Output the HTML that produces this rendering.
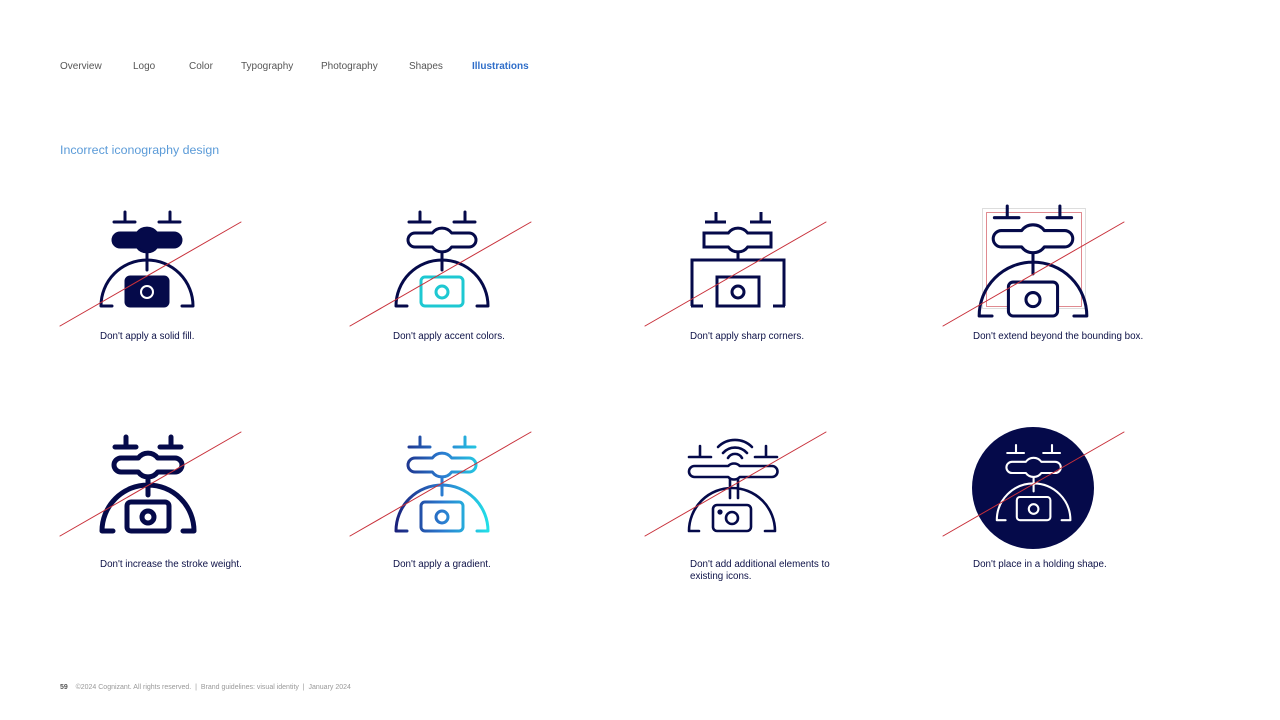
<!DOCTYPE html>
<html><head><meta charset="utf-8"><style>
body{margin:0;width:1280px;height:720px;background:#fff;font-family:"Liberation Sans",sans-serif;position:relative;overflow:hidden}
.nav{position:absolute;top:61px;font-size:10px;color:#555}
.t{position:absolute;font-size:9.8px;color:#0d1147;line-height:12px}
svg{position:absolute;left:0;top:0}
</style></head><body>
<div class="nav" style="left:60px">Overview</div>
<div class="nav" style="left:133px">Logo</div>
<div class="nav" style="left:189px">Color</div>
<div class="nav" style="left:241px">Typography</div>
<div class="nav" style="left:321px">Photography</div>
<div class="nav" style="left:409px">Shapes</div>
<div class="nav" style="left:472px;color:#2f6ec9;font-weight:bold">Illustrations</div>
<div style="position:absolute;left:60px;top:143px;font-size:12.4px;color:#5b9bd8">Incorrect iconography design</div>

<div class="t" style="left:100px;top:331px">Don't apply a solid fill.</div>
<div class="t" style="left:393px;top:331px">Don't apply accent colors.</div>
<div class="t" style="left:690px;top:331px">Don't apply sharp corners.</div>
<div class="t" style="left:973px;top:331px">Don't extend beyond the bounding box.</div>
<div class="t" style="left:100px;top:559px">Don't increase the stroke weight.</div>
<div class="t" style="left:393px;top:559px">Don't apply a gradient.</div>
<div class="t" style="left:690px;top:559px">Don't add additional elements to<br>existing icons.</div>
<div class="t" style="left:973px;top:559px">Don't place in a holding shape.</div>
<div style="position:absolute;left:60px;top:684px;font-size:7px;color:#999"><b style="color:#555">59</b>&nbsp;&nbsp;&nbsp;&nbsp;©2024 Cognizant. All rights reserved. &nbsp;| &nbsp;Brand guidelines: visual identity &nbsp;| &nbsp;January 2024</div>

<svg width="1280" height="720" viewBox="0 0 1280 720" fill="none" stroke-linecap="round" stroke-linejoin="round">
<defs>
<linearGradient id="g" gradientUnits="userSpaceOnUse" x1="0" y1="0" x2="95" y2="0"><stop offset="0" stop-color="#1a1f7a"/><stop offset="0.5" stop-color="#2a7bd0"/><stop offset="1" stop-color="#22e3e8"/></linearGradient>
</defs>
<g transform="translate(100,212)" stroke="#050a4a" stroke-width="3">
<path d="M14 10H35M25 0V10M59 10H80M70 0V10M47 40V58M1 94A46 46 0 0 1 93 94M1 94H12M82 94H93"/>
<path fill="#050a4a" d="M37.3 21H20A7 7 0 0 0 20 35H37.3A12 12 0 0 0 56.7 35H74A7 7 0 0 0 74 21H56.7A12 12 0 0 0 37.3 21Z"/>
<rect x="26" y="65" width="42" height="29" rx="4" fill="#050a4a"/>
<circle cx="47" cy="80" r="6" stroke="#fff" stroke-width="2"/>
</g>
<g transform="translate(395,212)" stroke="#050a4a" stroke-width="3">
<path d="M14 10H35M25 0V10M59 10H80M70 0V10M47 40V58M1 94A46 46 0 0 1 93 94M1 94H12M82 94H93"/>
<path d="M37.3 21H20A7 7 0 0 0 20 35H37.3A12 12 0 0 0 56.7 35H74A7 7 0 0 0 74 21H56.7A12 12 0 0 0 37.3 21Z"/>
<g stroke="#1ec8d2"><rect x="26" y="65" width="42" height="29" rx="4" fill="#fff"/><circle cx="47" cy="80" r="6"/></g>
</g>
<g transform="translate(691,212)" stroke="#050a4a" stroke-width="3" stroke-linecap="butt" stroke-linejoin="miter">
<path d="M14 10H35M25 0V10M59 10H80M70 0V10M47 40V47M1 94V48H93V94M0 94H12M82 94H94"/>
<path d="M37.3 21H13V35H37.3A12 12 0 0 0 56.7 35H80V21H56.7A12 12 0 0 0 37.3 21Z"/>
<rect x="26" y="65" width="42" height="29" fill="#fff"/><circle cx="47" cy="80" r="6"/>
</g>
<rect x="982.5" y="208.5" width="103" height="100" stroke="#ddd" fill="none"/>
<rect x="986.5" y="212.5" width="95" height="94" stroke="#e08a90" fill="none"/>
<g transform="translate(978,206) scale(1.17)" stroke="#050a4a" stroke-width="2.6">
<path d="M14 10H35M25 0V10M59 10H80M70 0V10M47 40V58M1 94A46 46 0 0 1 93 94M1 94H12M82 94H93"/>
<path d="M37.3 21H20A7 7 0 0 0 20 35H37.3A12 12 0 0 0 56.7 35H74A7 7 0 0 0 74 21H56.7A12 12 0 0 0 37.3 21Z"/>
<rect x="26" y="65" width="42" height="29" rx="4" fill="#fff"/><circle cx="47" cy="80" r="6"/>
</g>
<g transform="translate(101,437)" stroke="#050a4a" stroke-width="5">
<path d="M14 10H35M25 0V10M59 10H80M70 0V10M47 40V58M1 94A46 46 0 0 1 93 94M1 94H12M82 94H93"/>
<path d="M37.3 21H20A7 7 0 0 0 20 35H37.3A12 12 0 0 0 56.7 35H74A7 7 0 0 0 74 21H56.7A12 12 0 0 0 37.3 21Z"/>
<rect x="26" y="65" width="42" height="29" rx="4" fill="#fff"/><circle cx="47" cy="80" r="6"/>
</g>
<g transform="translate(395,437)" stroke="url(#g)" stroke-width="3">
<path d="M14 10H35M25 0V10M59 10H80M70 0V10M1 94A46 46 0 0 1 93 94M1 94H12M82 94H93"/>
<path d="M37.3 21H20A7 7 0 0 0 20 35H37.3A12 12 0 0 0 56.7 35H74A7 7 0 0 0 74 21H56.7A12 12 0 0 0 37.3 21Z"/>
<path d="M47 40V58" stroke="#2a7bd0"/>
<rect x="26" y="65" width="42" height="29" rx="4" fill="#fff"/><circle cx="47" cy="80" r="6"/>
</g>
<g transform="translate(689,437)" stroke="#050a4a" stroke-width="2.6">
<path d="M29 10A24 24 0 0 1 63 10M34 16A16 16 0 0 1 58 16M39 21A8 8 0 0 1 53 21"/>
<path d="M0 20H22M11 9V20M66 20H88M77 9V20M41 42V61M49 42V61M0 94A43 43 0 0 1 86 94M0 94H10M76 94H86"/>
<path d="M39.2 29H5.5A5.5 5.5 0 0 0 5.5 40H39.2A8 8 0 0 0 50.8 40H83A5.5 5.5 0 0 0 83 29H50.8A8 8 0 0 0 39.2 29Z"/>
<rect x="24" y="68" width="38" height="26" rx="4" fill="#fff"/><circle cx="43" cy="81" r="6"/><circle cx="31" cy="75" r="1.3" fill="#050a4a"/>
</g>
<circle cx="1033" cy="488" r="61" fill="#050a4a"/>
<g transform="translate(996,445) scale(0.8)" stroke="#fff" stroke-width="2.6">
<path d="M14 10H35M25 0V10M59 10H80M70 0V10M47 40V58M1 94A46 46 0 0 1 93 94M1 94H12M82 94H93"/>
<path d="M37.3 21H20A7 7 0 0 0 20 35H37.3A12 12 0 0 0 56.7 35H74A7 7 0 0 0 74 21H56.7A12 12 0 0 0 37.3 21Z"/>
<rect x="26" y="65" width="42" height="29" rx="4"/><circle cx="47" cy="80" r="6"/>
</g>
<g stroke="#c8303a" stroke-width="1">
<path d="M60 326L241 222M350 326L531 222M645 326L826 222M943 326L1124 222"/>
<path d="M60 536L241 432M350 536L531 432M645 536L826 432M943 536L1124 432"/>
</g>
</svg>
</body></html>
